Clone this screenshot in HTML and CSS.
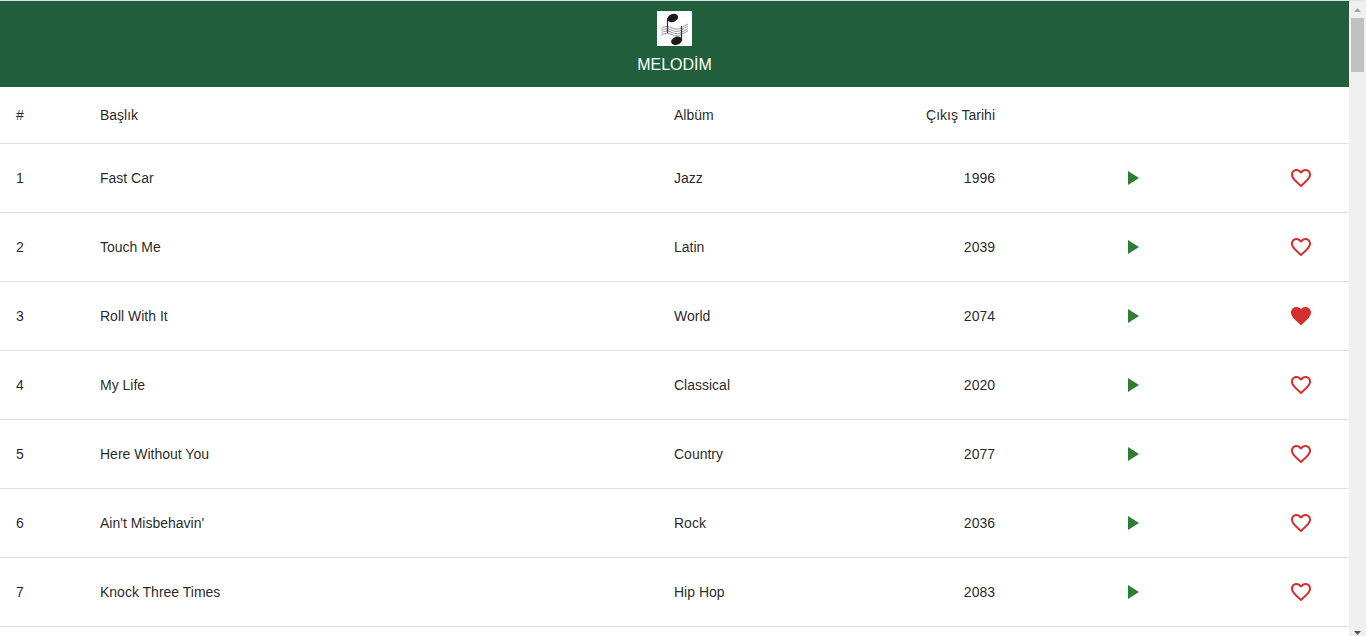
FILE: index.html
```html
<!DOCTYPE html>
<html lang="tr">
<head>
<meta charset="utf-8">
<meta name="viewport" content="width=device-width, initial-scale=1">
<title>Melodim</title>
<link rel="stylesheet" href="styles.css">
</head>
<body>
<svg class="sprite" aria-hidden="true">
  <symbol id="play" viewBox="0 0 24 24"><path d="M8 5v14l11-7z"/></symbol>
  <symbol id="heart" viewBox="0 0 24 24"><path d="M16.5 3c-1.74 0-3.41.81-4.5 2.09C10.91 3.81 9.24 3 7.5 3 4.42 3 2 5.42 2 8.5c0 3.78 3.4 6.86 8.55 11.54L12 21.35l1.45-1.32C18.6 15.36 22 12.28 22 8.5 22 5.42 19.58 3 16.5 3m-4.4 15.55-.1.1-.1-.1C7.14 14.24 4 11.39 4 8.5 4 6.5 5.5 5 7.5 5c1.54 0 3.04.99 3.57 2.36h1.87C13.46 5.99 14.96 5 16.5 5c2 0 3.5 1.5 3.5 3.5 0 2.89-3.14 5.74-7.9 10.05"/></symbol>
  <symbol id="heart-full" viewBox="0 0 24 24"><path d="m12 21.35-1.45-1.32C5.4 15.36 2 12.28 2 8.5 2 5.42 4.42 3 7.5 3c1.74 0 3.41.81 4.5 2.09C13.09 3.81 14.76 3 16.5 3 19.58 3 22 5.42 22 8.5c0 3.78-3.4 6.86-8.55 11.54z"/></symbol>
</svg>
<div class="page">
  <div class="content">
    <header class="app-bar">
      <svg class="logo" viewBox="0 0 35 35" role="img" aria-label="Melodim logo">
        <rect width="35" height="35" fill="#fff"/>
        <g fill="none" stroke="#666" stroke-width=".7">
          <path d="M4.500 17.500C7 15 11 15 14 16.500s7 2.500 10 .5 5-3 7-4"/>
          <path d="M4.500 19.500C7 17.300 11 17.300 14 18.800s7 2.500 10 .5 5-3 7-4"/>
          <path d="M4.500 21.700C7 19.600 11 19.600 14 21.100s7 2.500 10 .5 5-3 7-4"/>
          <path d="M4.500 24C7 22 11 22 14 23.400s7 2.500 10 .5 5-3 7-4"/>
        </g>
        <path d="M10.500 7v15M24.500 15v14" stroke="#333" stroke-width="1.200"/>
        <ellipse cx="15.800" cy="7" rx="5.500" ry="4" transform="rotate(-20 15.800 7)" fill="#1c1a1b"/>
        <ellipse cx="19.600" cy="29.800" rx="5.600" ry="4" transform="rotate(-20 19.600 29.800)" fill="#1c1a1b"/>
      </svg>
      <h1 class="brand">MELODİM</h1>
    </header>
    <table class="songs">
      <colgroup><col class="col-no"><col><col class="col-album"><col class="col-date"><col class="col-action"><col class="col-action"></colgroup>
      <thead>
        <tr><th>#</th><th>Başlık</th><th>Albüm</th><th class="end">Çıkış Tarihi</th><td></td><td></td></tr>
      </thead>
      <tbody>
        <tr><td>1</td><td>Fast Car</td><td>Jazz</td><td class="end">1996</td><td class="end"><button class="action play" aria-label="Çal"><svg><use href="#play"/></svg></button></td><td class="end"><button class="action like" aria-label="Beğen"><svg><use href="#heart"/></svg></button></td></tr>
        <tr><td>2</td><td>Touch Me</td><td>Latin</td><td class="end">2039</td><td class="end"><button class="action play" aria-label="Çal"><svg><use href="#play"/></svg></button></td><td class="end"><button class="action like" aria-label="Beğen"><svg><use href="#heart"/></svg></button></td></tr>
        <tr><td>3</td><td>Roll With It</td><td>World</td><td class="end">2074</td><td class="end"><button class="action play" aria-label="Çal"><svg><use href="#play"/></svg></button></td><td class="end"><button class="action like" aria-label="Beğenildi"><svg><use href="#heart-full"/></svg></button></td></tr>
        <tr><td>4</td><td>My Life</td><td>Classical</td><td class="end">2020</td><td class="end"><button class="action play" aria-label="Çal"><svg><use href="#play"/></svg></button></td><td class="end"><button class="action like" aria-label="Beğen"><svg><use href="#heart"/></svg></button></td></tr>
        <tr><td>5</td><td>Here Without You</td><td>Country</td><td class="end">2077</td><td class="end"><button class="action play" aria-label="Çal"><svg><use href="#play"/></svg></button></td><td class="end"><button class="action like" aria-label="Beğen"><svg><use href="#heart"/></svg></button></td></tr>
        <tr><td>6</td><td>Ain't Misbehavin'</td><td>Rock</td><td class="end">2036</td><td class="end"><button class="action play" aria-label="Çal"><svg><use href="#play"/></svg></button></td><td class="end"><button class="action like" aria-label="Beğen"><svg><use href="#heart"/></svg></button></td></tr>
        <tr><td>7</td><td>Knock Three Times</td><td>Hip Hop</td><td class="end">2083</td><td class="end"><button class="action play" aria-label="Çal"><svg><use href="#play"/></svg></button></td><td class="end"><button class="action like" aria-label="Beğen"><svg><use href="#heart"/></svg></button></td></tr>
      </tbody>
    </table>
  </div>
  <div class="scrollbar" aria-hidden="true">
    <svg class="arrow up" viewBox="0 0 17 17"><path d="M5 11 8.500 7 12 11z"/></svg>
    <div class="thumb"></div>
    <svg class="arrow down" viewBox="0 0 17 17"><path d="M5 12h7l-3.500 4z"/></svg>
  </div>
</div>
</body>
</html>
```
FILE: styles.css
```css
* {
  box-sizing: border-box;
}

body {
  margin: 0;
  background: #fff;
  color: rgba(0, 0, 0, 0.87);
  font-family: "Liberation Sans", Arial, sans-serif;
  font-size: 14px;
  line-height: 24px;
}

.sprite {
  display: none;
}

.page {
  display: grid;
  grid-template-columns: minmax(0, 1fr) 17px;
  height: 100vh;
  overflow: hidden;
  border-top: 1px solid #dee2e9;
}

.content {
  min-height: 0;
  overflow: hidden;
}

.app-bar {
  display: flex;
  flex-direction: column;
  align-items: center;
  gap: 7px;
  padding: 10px 16px;
  background: #215e3b;
  color: #fff;
}

.logo {
  display: block;
  width: 35px;
  height: 35px;
}

.brand {
  margin: 0;
  font-size: 16px;
  font-weight: 400;
}

.songs {
  width: 100%;
  table-layout: fixed;
  border-collapse: collapse;
}

.col-no {
  width: 84px;
}

.col-album {
  width: 210px;
}

.col-date {
  width: 143px;
}

.col-action {
  width: 169px;
}

.songs th,
.songs td {
  padding: 16px;
  border-bottom: 1px solid #e0e0e0;
  font-weight: 400;
  text-align: left;
}

.songs .end {
  text-align: right;
}

.action {
  display: inline-flex;
  align-items: center;
  justify-content: center;
  width: 64px;
  padding: 6px 8px;
  border: 0;
  background: transparent;
  vertical-align: middle;
  cursor: pointer;
}

.action svg {
  width: 24px;
  height: 24px;
  fill: currentColor;
}

.play {
  color: #2e7d32;
}

.like {
  color: #d32f2f;
}

.scrollbar {
  display: flex;
  flex-direction: column;
  align-items: center;
  background: #f0f0f0;
}

.arrow {
  display: block;
  width: 17px;
  height: 17px;
}

.up {
  fill: #a3a3a3;
}

.down {
  margin-top: auto;
  fill: #505050;
}

.thumb {
  width: 13px;
  height: 54px;
  background: #c1c1c1;
}
```
